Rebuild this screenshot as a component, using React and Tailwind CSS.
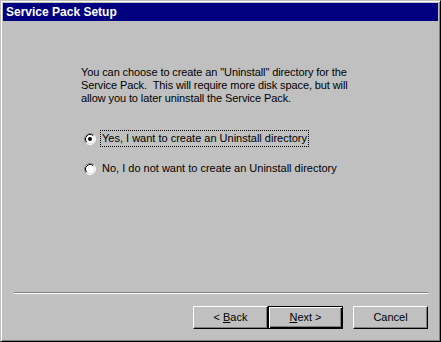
function Radio({ checked }) {
  return (
    <svg width="12" height="12" viewBox="0 0 12 12" className="shrink-0">
      <circle cx="6" cy="6" r="5" fill="#fff" />
      <path d="M2.11 9.89 A5.5 5.5 0 0 1 9.89 2.11" fill="none" stroke="#808080" />
      <path d="M9.89 2.11 A5.5 5.5 0 0 1 2.11 9.89" fill="none" stroke="#fff" />
      <path d="M2.82 9.18 A4.5 4.5 0 0 1 9.18 2.82" fill="none" stroke="#000" />
      <path d="M9.18 2.82 A4.5 4.5 0 0 1 2.82 9.18" fill="none" stroke="#dfdfdf" />
      {checked && <circle cx="6" cy="6" r="2" fill="#000" />}
    </svg>
  )
}

function Button({ children, isDefault }) {
  const base = 'w-[75px] h-[23px] flex items-center justify-center bg-[#c0c0c0] text-black'
  if (isDefault) {
    return (
      <button className={`${base} border border-black shadow-[inset_1px_1px_#fff,inset_-1px_-1px_#000,inset_-2px_-2px_#808080]`}>
        {children}
      </button>
    )
  }
  return (
    <button className={`${base} border border-t-white border-l-white border-r-black border-b-black shadow-[inset_-1px_-1px_#808080]`}>
      {children}
    </button>
  )
}

export default function App() {
  return (
    <div className="w-[441px] h-[342px] bg-[#c0c0c0] border border-t-[#c0c0c0] border-l-[#c0c0c0] border-r-black border-b-black shadow-[inset_1px_1px_#fff,inset_-1px_-1px_#808080] p-[2px] flex flex-col font-['Liberation_Sans',Arial,sans-serif] text-[11px] leading-[13px] text-black select-none">
      <div className="h-[18px] shrink-0 bg-[#000080] text-white font-bold text-[12px] pl-[3px] flex items-center">
        Service Pack Setup
      </div>

      <div className="flex-1 flex flex-col">
        <div className="pl-[78px] pt-[45px]">
          <p className="tracking-[-0.1px]">
            You can choose to create an "Uninstall" directory for the
            <br />
            Service Pack.&nbsp; This will require more disk space, but will
            <br />
            allow you to later uninstall the Service Pack.
          </p>

          <div className="mt-[25px] flex flex-col gap-[13px] pl-[3px]">
            <label className="flex items-center gap-[4px] h-[17px]">
              <Radio checked />
              <span className="border border-dotted border-black px-[1px] h-[17px] flex items-center">
                Yes, I want to create an Uninstall directory
              </span>
            </label>
            <label className="flex items-center gap-[4px] h-[17px]">
              <Radio />
              <span className="border border-transparent px-[1px]">
                No, I do not want to create an Uninstall directory
              </span>
            </label>
          </div>
        </div>

        <div className="flex-1" />

        <div className="ml-[11px] mr-[10px] h-[2px] border-t border-t-[#808080] border-b border-b-white" />

        <div className="mt-[12px] mb-[10px] mr-[10px] flex justify-end">
          <Button>
            &lt;&nbsp;<u>B</u>ack
          </Button>
          <Button isDefault>
            <u>N</u>ext&nbsp;&gt;
          </Button>
          <div className="w-[10px]" />
          <Button>Cancel</Button>
        </div>
      </div>
    </div>
  )
}
